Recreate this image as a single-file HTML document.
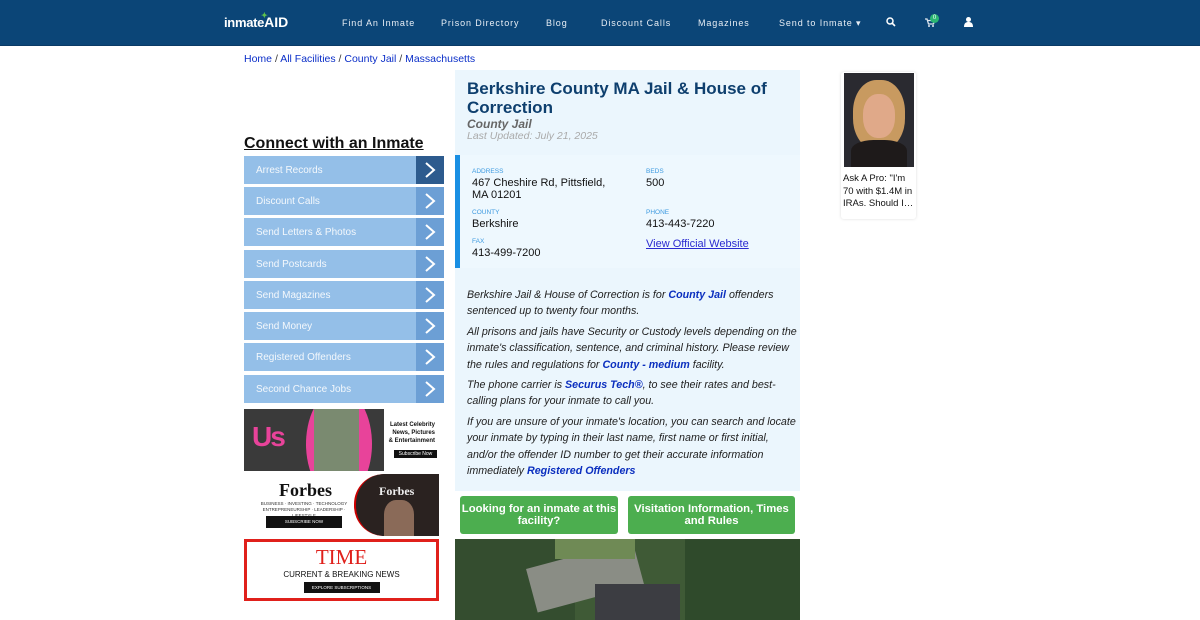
<!DOCTYPE html>
<html><head><meta charset="utf-8"><style>
*{margin:0;padding:0;box-sizing:border-box}
body{width:1200px;height:620px;overflow:hidden;background:#fff;font-family:"Liberation Sans",sans-serif;position:relative}
.a{position:absolute}
nav{position:absolute;left:0;top:0;width:1200px;height:46px;background:#0b4577;border-bottom:1px solid #0a3a66}
nav span{position:absolute;top:18px;color:#e8eef5;font-size:9px;letter-spacing:.9px}
.side{position:absolute;left:244px;width:200px;height:28px;background:#94bfe8;color:#f4f8fc;font-size:10px;line-height:30px;padding-left:12px}
.side i{position:absolute;right:0;top:0;width:28px;height:28px;background:#6c9fd5}
.side svg{position:absolute;right:7px;top:6px}
.lbl{font-size:6.5px;color:#3d9ae0;position:absolute}
.val{font-size:11px;color:#111;position:absolute;line-height:12px}
.txt{position:absolute;left:467px;width:334px;font-size:10.7px;font-style:italic;color:#222;line-height:16.3px}
.txt b{color:#0b2fbf}
.btn{position:absolute;top:496px;height:38px;background:#4cae4f;border-radius:3px;color:#fff;font-weight:bold;font-size:11.3px;text-align:center;line-height:12px;padding-top:7px}
</style></head><body>
<nav>
<div class="a" style="left:224px;top:14px;color:#fff;font-weight:bold;font-size:13px;letter-spacing:-.3px">inmate<span style="position:static;font-size:14px;color:#fff;letter-spacing:0;top:0">AID</span><span style="position:absolute;left:37px;top:-3px;color:#5fc24c;font-size:8px">✦</span></div>
<span style="left:342px">Find An Inmate</span>
<span style="left:441px">Prison Directory</span>
<span style="left:546px">Blog</span>
<span style="left:601px">Discount Calls</span>
<span style="left:698px">Magazines</span>
<span style="left:779px">Send to Inmate ▾</span>
<svg class="a" style="left:886px;top:17px" width="10" height="10" viewBox="0 0 10 10"><circle cx="4" cy="4" r="3" fill="none" stroke="#fff" stroke-width="1.5"/><path d="M6 6l3 3" stroke="#fff" stroke-width="1.6"/></svg>
<svg class="a" style="left:925px;top:18px" width="10" height="9" viewBox="0 0 10 9"><path d="M0 1h2l1.5 5h5l1-3.5H3" fill="none" stroke="#dfe7ef" stroke-width="1.3"/><circle cx="4" cy="8" r="1" fill="#dfe7ef"/><circle cx="8" cy="8" r="1" fill="#dfe7ef"/></svg>
<div class="a" style="left:930px;top:14px;width:9px;height:9px;border-radius:50%;background:#2bb673;color:#fff;font-size:6px;text-align:center;line-height:9px">0</div>
<svg class="a" style="left:964px;top:17px" width="9" height="10" viewBox="0 0 9 10"><circle cx="4.5" cy="2.5" r="2.5" fill="#fff"/><path d="M0 10c0-4 2-5 4.5-5S9 6 9 10z" fill="#fff"/></svg>
</nav>
<div class="a" style="left:244px;top:53px;font-size:10.5px;color:#0a2ec8">Home <span style="color:#333">/</span> All Facilities <span style="color:#333">/</span> County Jail <span style="color:#333">/</span> Massachusetts</div>
<div class="a" style="left:244px;top:135px;font-size:16px;font-weight:bold;color:#111;text-decoration:underline">Connect with an Inmate</div>
<div class="side" style="top:156px">Arrest Records<i style="background:#2d5b8e"><svg width="14" height="16" viewBox="0 0 14 16"><path d="M3 1l8 7-8 7" fill="none" stroke="#fff" stroke-width="2"/></svg></i></div>
<div class="side" style="top:187px">Discount Calls<i><svg width="14" height="16" viewBox="0 0 14 16"><path d="M3 1l8 7-8 7" fill="none" stroke="#fff" stroke-width="2"/></svg></i></div>
<div class="side" style="top:218px">Send Letters &amp; Photos<i><svg width="14" height="16" viewBox="0 0 14 16"><path d="M3 1l8 7-8 7" fill="none" stroke="#fff" stroke-width="2"/></svg></i></div>
<div class="side" style="top:250px">Send Postcards<i><svg width="14" height="16" viewBox="0 0 14 16"><path d="M3 1l8 7-8 7" fill="none" stroke="#fff" stroke-width="2"/></svg></i></div>
<div class="side" style="top:281px">Send Magazines<i><svg width="14" height="16" viewBox="0 0 14 16"><path d="M3 1l8 7-8 7" fill="none" stroke="#fff" stroke-width="2"/></svg></i></div>
<div class="side" style="top:312px">Send Money<i><svg width="14" height="16" viewBox="0 0 14 16"><path d="M3 1l8 7-8 7" fill="none" stroke="#fff" stroke-width="2"/></svg></i></div>
<div class="side" style="top:343px">Registered Offenders<i><svg width="14" height="16" viewBox="0 0 14 16"><path d="M3 1l8 7-8 7" fill="none" stroke="#fff" stroke-width="2"/></svg></i></div>
<div class="side" style="top:375px">Second Chance Jobs<i><svg width="14" height="16" viewBox="0 0 14 16"><path d="M3 1l8 7-8 7" fill="none" stroke="#fff" stroke-width="2"/></svg></i></div>
<!-- Us ad -->
<div class="a" style="left:244px;top:409px;width:195px;height:62px;background:#fff;overflow:hidden">
<div class="a" style="left:0;top:0;width:140px;height:62px;background:#3a3a3a"></div>
<div class="a" style="left:40px;top:-20px;width:110px;height:110px;border-radius:50%;background:#e8439a;transform:scaleX(.6) rotate(30deg)"></div>
<div class="a" style="left:70px;top:0;width:45px;height:62px;background:#7a8a70"></div>
<div class="a" style="left:8px;top:12px;color:#e8439a;font-weight:bold;font-size:28px;letter-spacing:-2px">Us</div>
<div class="a" style="left:143px;top:12px;width:48px;font-size:6px;font-weight:bold;text-align:right;line-height:8px;color:#111">Latest Celebrity News, Pictures &amp; Entertainment</div>
<div class="a" style="left:150px;top:41px;width:43px;height:8px;background:#111;color:#fff;font-size:5px;text-align:center;line-height:8px">Subscribe Now</div>
</div>
<!-- Forbes -->
<div class="a" style="left:244px;top:474px;width:195px;height:62px;background:#fff;overflow:hidden">
<div class="a" style="left:35px;top:6px;font-family:'Liberation Serif',serif;font-weight:bold;font-size:18px;color:#111">Forbes</div>
<div class="a" style="left:14px;top:27px;width:92px;font-size:4.5px;text-align:center;line-height:6px;color:#333">BUSINESS · INVESTING · TECHNOLOGY ENTREPRENEURSHIP · LEADERSHIP · LIFESTYLE</div>
<div class="a" style="left:22px;top:42px;width:76px;height:12px;background:#111;color:#fff;font-size:4.5px;text-align:center;line-height:12px">SUBSCRIBE NOW</div>
<div class="a" style="left:110px;top:0;width:85px;height:62px;background:#2a2220;border-radius:30px 0 0 30px;border-left:2px solid #c00"></div>
<div class="a" style="left:135px;top:10px;font-family:'Liberation Serif',serif;font-weight:bold;font-size:12px;color:#eee">Forbes</div>
<div class="a" style="left:140px;top:26px;width:30px;height:36px;background:#8a6a58;border-radius:40% 40% 0 0"></div>
</div>
<!-- TIME -->
<div class="a" style="left:244px;top:539px;width:195px;height:62px;border:3px solid #e0201b;background:#fff;text-align:center">
<div style="font-family:'Liberation Serif',serif;font-size:21px;color:#e0201b;line-height:22px;margin-top:4px">TIME</div>
<div style="font-size:8px;color:#111;margin-top:2px">CURRENT &amp; BREAKING NEWS</div>
<div style="width:76px;height:11px;background:#111;color:#fff;font-size:4.5px;line-height:11px;margin:3px auto 0">EXPLORE SUBSCRIPTIONS</div>
</div>
<!-- main box -->
<div class="a" style="left:455px;top:70px;width:345px;height:421px;background:#ebf6fd"></div>
<div class="a" style="left:467px;top:79px;width:320px;font-size:17px;font-weight:bold;color:#0e3f6e;line-height:19px">Berkshire County MA Jail &amp; House of Correction</div>
<div class="a" style="left:467px;top:117px;font-size:12px;font-weight:bold;font-style:italic;color:#666">County Jail</div>
<div class="a" style="left:467px;top:130px;font-size:10.5px;font-style:italic;color:#aaa">Last Updated: July 21, 2025</div>
<div class="a" style="left:455px;top:155px;width:345px;height:113px;background:#eef8fe;border-left:5px solid #1a8fe3"></div>
<div class="lbl" style="left:472px;top:168px">ADDRESS</div>
<div class="val" style="left:472px;top:177px">467 Cheshire Rd, Pittsfield,<br>MA 01201</div>
<div class="lbl" style="left:646px;top:168px">BEDS</div>
<div class="val" style="left:646px;top:177px">500</div>
<div class="lbl" style="left:472px;top:209px">COUNTY</div>
<div class="val" style="left:472px;top:218px">Berkshire</div>
<div class="lbl" style="left:646px;top:209px">PHONE</div>
<div class="val" style="left:646px;top:218px">413-443-7220</div>
<div class="lbl" style="left:472px;top:238px">FAX</div>
<div class="val" style="left:472px;top:247px">413-499-7200</div>
<div class="val" style="left:646px;top:238px;color:#2a2ad0;text-decoration:underline">View Official Website</div>
<div class="txt" style="top:287px">Berkshire Jail &amp; House of Correction is for <b>County Jail</b> offenders sentenced up to twenty four months.</div>
<div class="txt" style="top:324px">All prisons and jails have Security or Custody levels depending on the inmate's classification, sentence, and criminal history. Please review the rules and regulations for <b>County - medium</b> facility.</div>
<div class="txt" style="top:377px">The phone carrier is <b>Securus Tech®</b>, to see their rates and best-calling plans for your inmate to call you.</div>
<div class="txt" style="top:414px">If you are unsure of your inmate's location, you can search and locate your inmate by typing in their last name, first name or first initial, and/or the offender ID number to get their accurate information immediately <b>Registered Offenders</b></div>
<div class="btn" style="left:460px;width:158px">Looking for an inmate at this facility?</div>
<div class="btn" style="left:628px;width:167px">Visitation Information, Times and Rules</div>
<!-- aerial -->
<div class="a" style="left:455px;top:539px;width:345px;height:81px;background:#3f5a36;overflow:hidden">
<div class="a" style="left:0;top:0;width:120px;height:81px;background:#344d2f"></div>
<div class="a" style="left:230px;top:0;width:115px;height:81px;background:#2f4a2b"></div>
<div class="a" style="left:75px;top:15px;width:110px;height:45px;background:#8a8d85;transform:rotate(-15deg)"></div>
<div class="a" style="left:140px;top:45px;width:85px;height:40px;background:#3c3d42"></div>
<div class="a" style="left:100px;top:0;width:80px;height:20px;background:#6f8a55"></div>
</div>
<!-- right ad -->
<div class="a" style="left:841px;top:72px;width:75px;height:147px;border-radius:3px;box-shadow:0 0 3px #ddd;background:#fff;overflow:hidden">
<div class="a" style="left:3px;top:1px;width:70px;height:94px;background:#2a2a30"></div>
<div class="a" style="left:12px;top:8px;width:52px;height:70px;border-radius:45%;background:#c89a60"></div>
<div class="a" style="left:22px;top:22px;width:32px;height:44px;border-radius:45%;background:#e0a989"></div>
<div class="a" style="left:10px;top:68px;width:56px;height:27px;border-radius:40% 40% 0 0;background:#1e1a1a"></div>
<div class="a" style="left:2px;top:101px;width:72px;font-size:9.5px;line-height:12.5px;color:#111">Ask A Pro: "I'm 70 with $1.4M in IRAs. Should I…</div>
</div>
</body></html>
